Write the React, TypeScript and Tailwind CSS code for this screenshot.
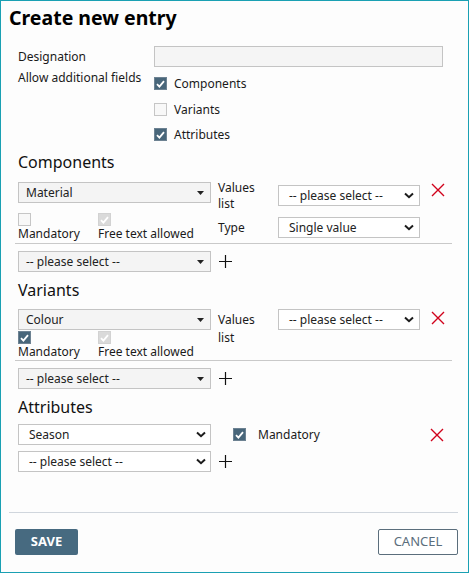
import React from "react";

const font = { fontFamily: '"Noto Sans", "Open Sans", sans-serif' };

function Triangle() {
  return (
    <svg width="7" height="4" viewBox="0 0 7 4" className="shrink-0">
      <path d="M0 0 H7 L3.5 4 Z" fill="#222" />
    </svg>
  );
}

function Chevron() {
  return (
    <svg width="10" height="7" viewBox="0 0 10 7" className="shrink-0">
      <path d="M1 1.5 L5 5.2 L9 1.5" fill="none" stroke="#1c1c1c" strokeWidth="2" />
    </svg>
  );
}

function GraySelect({ text }: { text: string }) {
  return (
    <div className="flex h-[21px] w-[193px] shrink-0 items-center border border-[#c4c4c4] bg-[#f4f4f4] pl-[7px] pr-[6px] text-[12px] text-[#222]">
      <span className="flex-1 whitespace-nowrap leading-none">{text}</span>
      <Triangle />
    </div>
  );
}

function WhiteSelect({ text, w, pl, pr }: { text: string; w: string; pl: string; pr: string }) {
  return (
    <div className={`flex h-[21px] ${w} shrink-0 items-center border border-[#c4c4c4] bg-white ${pl} ${pr} text-[12px] text-[#222]`}>
      <span className="flex-1 whitespace-nowrap leading-none">{text}</span>
      <Chevron />
    </div>
  );
}

type BoxState = "on" | "off" | "disabled";

function Box({ state }: { state: BoxState }) {
  if (state === "off") {
    return <div className="h-[13px] w-[13px] shrink-0 border border-[#c6c6c6] bg-[#f8f8f8]" />;
  }
  const dark = state === "on";
  return (
    <div
      className={
        dark
          ? "flex h-[13px] w-[13px] shrink-0 items-center justify-center border border-[#6d8292] bg-[#48667a]"
          : "flex h-[13px] w-[13px] shrink-0 items-center justify-center border border-[#d2d2d2] bg-[#dadada]"
      }
    >
      <svg width="9" height="8" viewBox="0 0 9 8">
        <path d="M1 4.2 L3.4 6.6 L8 1.2" fill="none" stroke="white" strokeWidth="1.8" />
      </svg>
    </div>
  );
}

function RemoveX() {
  return (
    <svg width="14" height="14" viewBox="0 0 14 14" className="shrink-0">
      <path d="M1 1 L13 13 M13 1 L1 13" stroke="#d0021b" strokeWidth="1.4" />
    </svg>
  );
}

function Plus() {
  return (
    <svg width="13" height="13" viewBox="0 0 13 13" className="shrink-0">
      <path d="M6.5 0 V13 M0 6.5 H13" stroke="#111" strokeWidth="1.2" />
    </svg>
  );
}

function CheckStack({ state, label }: { state: BoxState; label: string }) {
  return (
    <div className="flex w-[80px] flex-col items-start">
      <Box state={state} />
      <span className="whitespace-nowrap text-[12px] leading-[15px] text-[#1a1a1a]">{label}</span>
    </div>
  );
}

function Divider() {
  return <div className="-ml-[3px] h-px w-[437px] bg-[#c9c9c9]" />;
}

function AddRow({ mt }: { mt: string }) {
  return (
    <div className={`flex items-center ${mt}`}>
      <GraySelect text="-- please select --" />
      <div className="ml-[8px]">
        <Plus />
      </div>
    </div>
  );
}

function Heading({ text, mt }: { text: string; mt: string }) {
  return <div className={`${mt} text-[16px] leading-[20px] text-[#111]`}>{text}</div>;
}

function ValuesLabel({ cls }: { cls: string }) {
  return (
    <div className={`flex w-[60px] flex-col text-[12px] text-[#1a1a1a] ${cls}`}>
      <span>Values</span>
      <span>list</span>
    </div>
  );
}

export default function App() {
  return (
    <div style={font} className="flex h-[573px] w-[469px] flex-col border border-[#1aa0b3] bg-[#fdfdfd] text-[#111]">
      <h1 className="pl-[8px] pt-[4px] text-[19.5px] font-bold leading-[26px] text-black">Create new entry</h1>

      <div className="flex w-[451px] flex-col pl-[17px]">
        {/* general settings */}
        <div className="mt-[15px] flex h-[21px] items-center">
          <span className="w-[136px] text-[12px] text-[#1a1a1a]">Designation</span>
          <div className="h-[21px] w-[289px] border border-[#c4c4c4] bg-[#f5f5f5]" />
        </div>
        <div className="flex">
          <span className="mt-[3px] w-[136px] whitespace-nowrap text-[12px] leading-[16px] text-[#1a1a1a]">Allow additional fields</span>
          <div className="flex flex-col">
            <div className="mt-[10px] flex h-[13px] items-center gap-[7px]">
              <Box state="on" />
              <span className="text-[12px] leading-none text-[#1a1a1a]">Components</span>
            </div>
            <div className="mt-[13px] flex h-[13px] items-center gap-[7px]">
              <Box state="off" />
              <span className="text-[12px] leading-none text-[#1a1a1a]">Variants</span>
            </div>
            <div className="mt-[12px] flex h-[13px] items-center gap-[7px]">
              <Box state="on" />
              <span className="text-[12px] leading-none text-[#1a1a1a]">Attributes</span>
            </div>
          </div>
        </div>

        {/* components */}
        <Heading text="Components" mt="mt-[11px]" />
        <div className="mt-[8px] flex">
          <div className="flex w-[200px] flex-col">
            <div className="mt-[2px]">
              <GraySelect text="Material" />
            </div>
            <div className="mt-[10px] flex">
              <CheckStack state="off" label="Mandatory" />
              <CheckStack state="disabled" label="Free text allowed" />
            </div>
          </div>
          <div className="flex flex-col">
            <div className="flex items-start">
              <ValuesLabel cls="leading-[16px]" />
              <div className="mt-[5px]">
                <WhiteSelect text="-- please select --" w="w-[142px]" pl="pl-[10px]" pr="pr-[5px]" />
              </div>
              <div className="ml-[11px] mt-[3px]">
                <RemoveX />
              </div>
            </div>
            <div className="mt-[5px] flex items-center">
              <span className="w-[60px] text-[12px] text-[#1a1a1a]">Type</span>
              <WhiteSelect text="Single value" w="w-[142px]" pl="pl-[10px]" pr="pr-[5px]" />
            </div>
          </div>
        </div>
        <div className="mt-[2px]">
          <Divider />
        </div>
        <AddRow mt="mt-[7px]" />

        {/* variants */}
        <Heading text="Variants" mt="mt-[8px]" />
        <div className="mt-[9px] flex">
          <div className="flex w-[200px] flex-col">
            <GraySelect text="Colour" />
            <div className="mt-[1px] flex">
              <CheckStack state="on" label="Mandatory" />
              <CheckStack state="disabled" label="Free text allowed" />
            </div>
          </div>
          <div className="flex items-start">
            <ValuesLabel cls="mt-[2px] leading-[18px]" />
            <WhiteSelect text="-- please select --" w="w-[142px]" pl="pl-[10px]" pr="pr-[5px]" />
            <div className="ml-[11px] mt-[2px]">
              <RemoveX />
            </div>
          </div>
        </div>
        <div className="mt-[1px]">
          <Divider />
        </div>
        <AddRow mt="mt-[7px]" />

        {/* attributes */}
        <Heading text="Attributes" mt="mt-[8px]" />
        <div className="mt-[7px] flex items-center">
          <WhiteSelect text="Season" w="w-[193px]" pl="pl-[10px]" pr="pr-[4px]" />
          <div className="ml-[22px]">
            <Box state="on" />
          </div>
          <span className="ml-[12px] text-[12px] text-[#1a1a1a]">Mandatory</span>
          <div className="ml-auto mr-[8px]">
            <RemoveX />
          </div>
        </div>
        <div className="mt-[6px] flex items-center">
          <WhiteSelect text="-- please select --" w="w-[193px]" pl="pl-[10px]" pr="pr-[4px]" />
          <div className="ml-[8px]">
            <Plus />
          </div>
        </div>
      </div>

      {/* footer */}
      <div className="mt-auto flex flex-col pb-[17px]">
        <div className="ml-[8px] h-px w-[449px] bg-[#d0d6dd]" />
        <div className="mt-[16px] flex items-center justify-between pl-[14px] pr-[10px]">
          <button className="h-[26px] w-[63px] rounded-[2px] bg-[#476a80] text-[13px] font-bold text-white">SAVE</button>
          <button className="h-[26px] w-[80px] rounded-[2px] border border-[#5b6e7c] bg-white text-[13px] text-[#5b6e7c]">CANCEL</button>
        </div>
      </div>
    </div>
  );
}
